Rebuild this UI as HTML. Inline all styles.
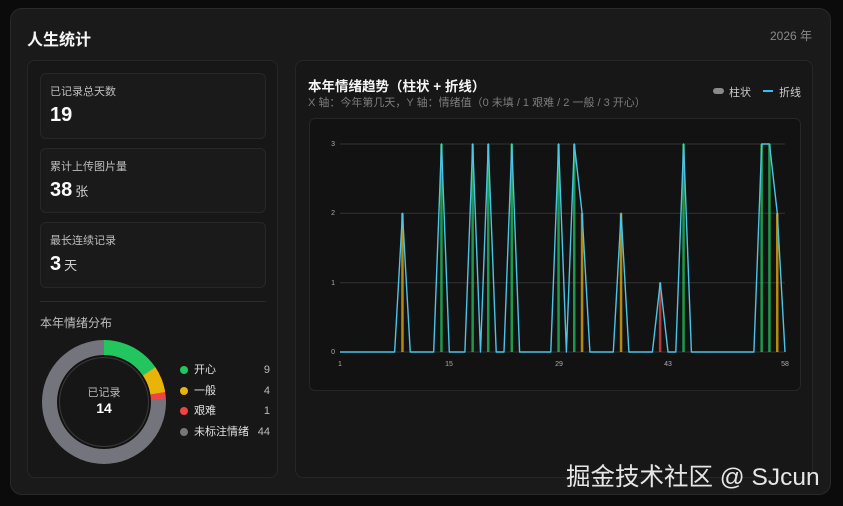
<!DOCTYPE html>
<html><head><meta charset="utf-8"><style>
*{margin:0;padding:0;box-sizing:border-box}
body{width:843px;height:506px;background:#0b0b0b;font-family:"Liberation Sans","Noto Sans CJK SC",sans-serif;position:relative;overflow:hidden;color:#eee}
.abs{position:absolute}
.card{position:absolute;left:10px;top:8px;width:821px;height:487px;background:#1a1a1a;border:1px solid #2a2a2a;border-radius:12px}
.panel{position:absolute;background:#171717;border:1px solid #262626;border-radius:8px}
.stat{position:absolute;left:40px;width:226px;background:#1a1a1a;border:1px solid #272727;border-radius:6px}
.stat .l{position:absolute;left:9px;top:9px;font-size:11px;color:#bdbdbd}
.stat .v{position:absolute;left:9px;top:30px;font-size:20px;font-weight:bold;color:#fafafa}
.stat .v span{font-size:13px;font-weight:normal;color:#cfcfcf;margin-left:3px}
.lg{position:absolute;left:180px;width:92px;font-size:11px;color:#e0e0e0;height:14px;line-height:14px}
.lg i{position:absolute;left:0;top:3px;width:8px;height:8px;border-radius:50%}
.lg b{position:absolute;left:14px;font-weight:normal}
.lg em{position:absolute;right:2px;font-style:normal;color:#bbb}
</style></head><body>
<div class="card"></div>
<div class="abs" style="left:27px;top:26px;font-size:16px;font-weight:bold;color:#f5f5f5">人生统计</div>
<div class="abs" style="left:770px;top:27px;font-size:12px;color:#8a8a8a">2026 年</div>

<div class="panel" style="left:27px;top:60px;width:251px;height:418px"></div>
<div class="stat" style="top:73px;height:66px"><div class="l">已记录总天数</div><div class="v">19</div></div>
<div class="stat" style="top:148px;height:65px"><div class="l">累计上传图片量</div><div class="v">38<span>张</span></div></div>
<div class="stat" style="top:222px;height:66px"><div class="l">最长连续记录</div><div class="v">3<span>天</span></div></div>
<div class="abs" style="left:40px;top:301px;width:226px;height:1px;background:#2a2a2a"></div>
<div class="abs" style="left:40px;top:314px;font-size:12px;color:#bdbdbd">本年情绪分布</div>
<div class="abs" style="left:42px;top:340px;width:124px;height:124px;border-radius:50%;background:conic-gradient(#22c55e 0deg 55.9deg,#eab308 55.9deg 80.7deg,#ef4444 80.7deg 86.9deg,#74757c 86.9deg 360deg)"></div>
<div class="abs" style="left:59px;top:357px;width:90px;height:90px;border-radius:50%;background:#161616;border:1px solid #3a3a3a;box-shadow:0 0 0 2px #121212"></div>
<div class="abs" style="left:59px;top:384px;width:90px;text-align:center;font-size:11px;color:#bbb">已记录</div>
<div class="abs" style="left:59px;top:400px;width:90px;text-align:center;font-size:14px;font-weight:bold;color:#fff">14</div>
<div class="lg" style="top:363px"><i style="background:#22c55e"></i><b>开心</b><em>9</em></div>
<div class="lg" style="top:384px"><i style="background:#eab308"></i><b>一般</b><em>4</em></div>
<div class="lg" style="top:404px"><i style="background:#ef4444"></i><b>艰难</b><em>1</em></div>
<div class="lg" style="top:425px"><i style="background:#777"></i><b>未标注情绪</b><em>44</em></div>

<div class="panel" style="left:295px;top:60px;width:518px;height:418px"></div>
<div class="abs" style="left:308px;top:75px;font-size:13.5px;font-weight:bold;color:#f5f5f5">本年情绪趋势（柱状 + 折线）</div>
<div class="abs" style="left:308px;top:94px;font-size:11px;color:#7c7c7c">X 轴：今年第几天，Y 轴：情绪值（0 未填 / 1 艰难 / 2 一般 / 3 开心）</div>
<div class="abs" style="left:713px;top:88px;width:11px;height:6px;border-radius:3px;background:#8a8a8a"></div>
<div class="abs" style="left:729px;top:84px;font-size:11px;color:#ccc">柱状</div>
<div class="abs" style="left:763px;top:90px;width:10px;height:2px;background:#38bdf8"></div>
<div class="abs" style="left:779px;top:84px;font-size:11px;color:#ccc">折线</div>
<div class="abs" style="left:309px;top:118px;width:492px;height:273px;background:#121212;border:1px solid #262626;border-radius:6px"></div>

<svg class="abs" style="left:0;top:0" width="843" height="506" font-family="Liberation Sans" font-size="7" fill="#aaa">
<g stroke="#333" stroke-width="1">
<line x1="340" y1="144" x2="785" y2="144"/><line x1="340" y1="213.3" x2="785" y2="213.3"/><line x1="340" y1="282.7" x2="785" y2="282.7"/><line x1="340" y1="352" x2="785" y2="352"/>
</g>
<text x="335" y="146" text-anchor="end">3</text><text x="335" y="215" text-anchor="end">2</text><text x="335" y="285" text-anchor="end">1</text><text x="335" y="354" text-anchor="end">0</text>
<text x="340" y="366" text-anchor="middle">1</text><text x="449" y="366" text-anchor="middle">15</text><text x="559" y="366" text-anchor="middle">29</text><text x="668" y="366" text-anchor="middle">43</text><text x="785" y="366" text-anchor="middle">58</text>
<g opacity="0.75">
<rect x="401.2" y="213.3" width="2.5" height="138.7" fill="#eab308"/>
<rect x="440.2" y="144" width="2.5" height="208" fill="#22c55e"/>
<rect x="471.4" y="144" width="2.5" height="208" fill="#22c55e"/>
<rect x="487" y="144" width="2.5" height="208" fill="#22c55e"/>
<rect x="510.5" y="144" width="2.5" height="208" fill="#22c55e"/>
<rect x="557.3" y="144" width="2.5" height="208" fill="#22c55e"/>
<rect x="573" y="144" width="2.5" height="208" fill="#22c55e"/>
<rect x="580.8" y="213.3" width="2.5" height="138.7" fill="#eab308"/>
<rect x="619.8" y="213.3" width="2.5" height="138.7" fill="#eab308"/>
<rect x="658.9" y="282.7" width="2.5" height="69.3" fill="#ef4444"/>
<rect x="682.3" y="144" width="2.5" height="208" fill="#22c55e"/>
<rect x="760.4" y="144" width="2.5" height="208" fill="#22c55e"/>
<rect x="768.2" y="144" width="2.5" height="208" fill="#22c55e"/>
<rect x="776" y="213.3" width="2.5" height="138.7" fill="#eab308"/>
</g>
<polyline fill="none" stroke="#4cc4e6" stroke-width="1.4" stroke-linejoin="round" points="340,352 394.65,352 402.46,213.3 410.26,352 433.68,352 441.49,144 449.3,352 464.9,352 472.7,144 480.5,352 488.3,144 496.2,352 504,352 511.8,144 519.6,352 550.8,352 558.6,144 566.4,352 574.3,144 582.1,213.3 589.9,352 613.3,352 621.1,213.3 628.9,352 652.4,352 660.2,282.7 668,352 675.8,352 683.6,144 691.4,352 753.9,352 761.7,144 769.5,144 777.3,213.3 785,352"/>
</svg>
<div class="abs" style="left:566px;top:458px;font-size:24.5px;color:#e6e6e6;white-space:nowrap">掘金技术社区 @ SJcun</div>
</body></html>
